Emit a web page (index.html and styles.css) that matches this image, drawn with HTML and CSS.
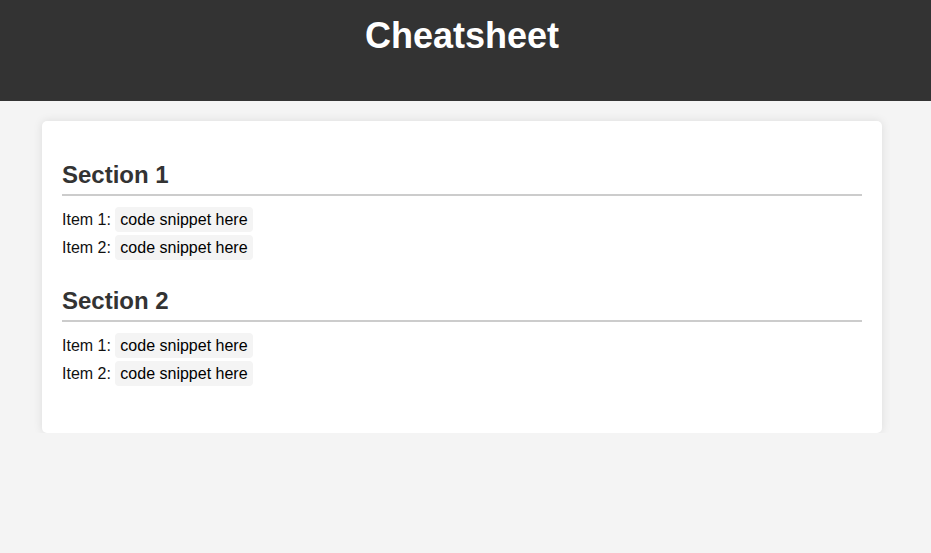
FILE: index.html
```html
<!DOCTYPE html>
<html lang="en">
<head>
<meta charset="utf-8">
<title>Cheatsheet</title>
<link rel="stylesheet" href="styles.css">
</head>
<body>
<header class="site-header">
  <h1 class="site-title">Cheatsheet</h1>
</header>
<div class="wrap">
  <main class="card">
    <section class="section">
      <h2 class="section-title">Section 1</h2>
      <div class="item">Item 1: <code class="snippet">code snippet here</code></div>
      <div class="item">Item 2: <code class="snippet">code snippet here</code></div>
    </section>
    <section class="section">
      <h2 class="section-title">Section 2</h2>
      <div class="item">Item 1: <code class="snippet">code snippet here</code></div>
      <div class="item">Item 2: <code class="snippet">code snippet here</code></div>
    </section>
  </main>
</div>
</body>
</html>
```
FILE: styles.css
```css
html, body {
  margin: 0;
  padding: 0;
}
body {
  background: #f4f4f4;
  font-family: "Liberation Sans", Arial, sans-serif;
  font-size: 16px;
  color: #111;
}
.site-header {
  background: #333;
  color: #fff;
  padding: 15px 7px 45px 0;
  text-align: center;
}
.site-title {
  margin: 0;
  font-size: 36px;
  line-height: 41px;
  font-weight: bold;
}
.wrap {
  padding-right: 7px;
}
.card {
  display: block;
  width: 800px;
  margin: 20px auto 0;
  padding: 20px;
  background: #fff;
  border-radius: 5px;
  box-shadow: 0 0 10px rgba(0, 0, 0, 0.1);
}
.section {
  margin-bottom: 25px;
}
.section-title {
  margin: 20px 0 10px;
  padding-bottom: 5px;
  border-bottom: 2px solid #ccc;
  font-size: 24px;
  font-weight: bold;
  color: #333;
}
.item {
  line-height: 28px;
}
.snippet {
  font-family: "Liberation Sans", Arial, sans-serif;
  font-size: 16px;
  background: #f4f4f4;
  padding: 4px 5px;
  border-radius: 4px;
  color: #000;
}
```
